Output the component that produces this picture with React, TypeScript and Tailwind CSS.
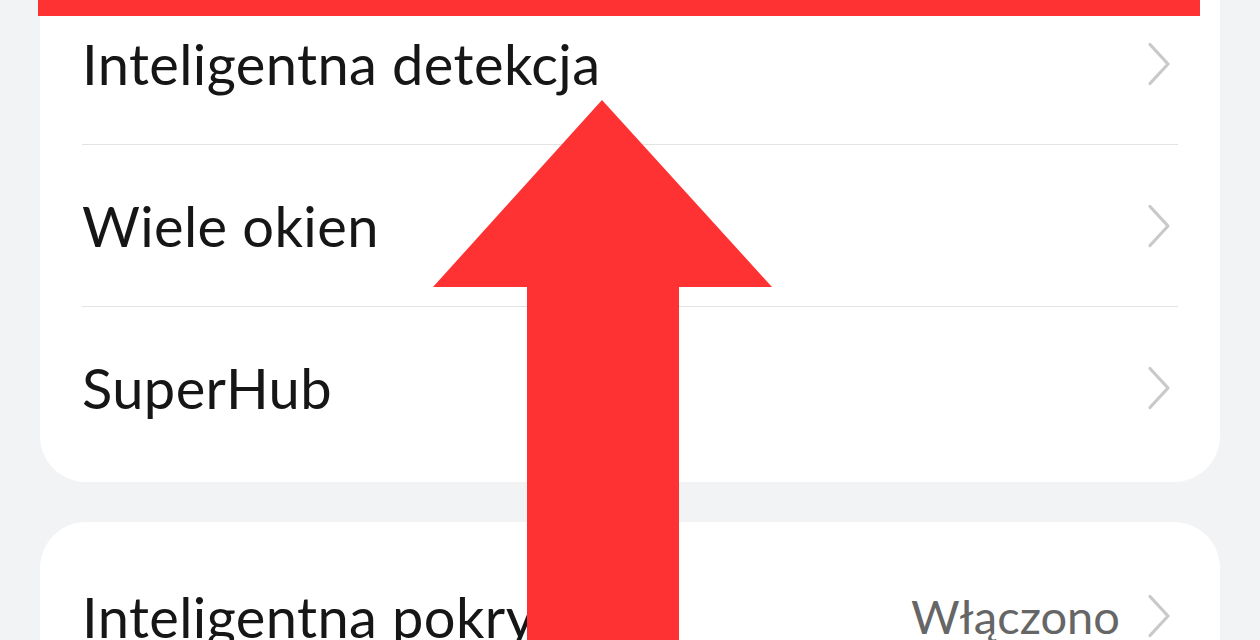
import React from "react";

function Chevron() {
  return (
    <svg width="26" height="44" viewBox="0 0 26 44" className="shrink-0">
      <path d="M4 2.5 L22 22 L4 41.5" fill="none" stroke="#c9c9c9" strokeWidth="3.2" strokeLinecap="round" strokeLinejoin="round" />
    </svg>
  );
}

function Row({ label, value }: { label: string; value?: string }) {
  return (
    <div className="flex h-[161px] items-center justify-between pr-[6px]">
      <span className="whitespace-nowrap text-[56px] leading-[1.2] tracking-[0.4px] text-[#161616]">{label}</span>
      <div className="flex items-center gap-[26px]">
        {value && <span className="whitespace-nowrap text-[47px] leading-[1.2] text-[#666666]">{value}</span>}
        <Chevron />
      </div>
    </div>
  );
}

export default function App() {
  return (
    <div className="relative h-[640px] w-[1260px] overflow-hidden bg-[#f1f3f4]" style={{ fontFamily: "Lato, 'Noto Sans', sans-serif" }}>
      <div className="flex flex-col gap-[40px] px-[40px]">
        <div className="-mt-[17px] rounded-b-[46px] bg-white px-[42px] pb-[14px]">
          <div className="border-b border-[#e3e3e3]">
            <Row label="Inteligentna detekcja" />
          </div>
          <div className="border-b border-[#e3e3e3]">
            <Row label="Wiele okien" />
          </div>
          <Row label="SuperHub" />
        </div>
        <div className="rounded-[46px] bg-white px-[42px] pt-[14px] pb-[14px]">
          <Row label="Inteligentna pokrywa" value="Włączono" />
        </div>
      </div>
      <div className="absolute left-[38px] top-0 h-[16px] w-[1162px] bg-[#fe3233]" />
      <svg className="absolute left-0 top-0" width="1260" height="640" viewBox="0 0 1260 640">
        <polygon points="602,100 772,287 679,287 679,640 527,640 527,287 433,287" fill="#fe3233" />
      </svg>
    </div>
  );
}
